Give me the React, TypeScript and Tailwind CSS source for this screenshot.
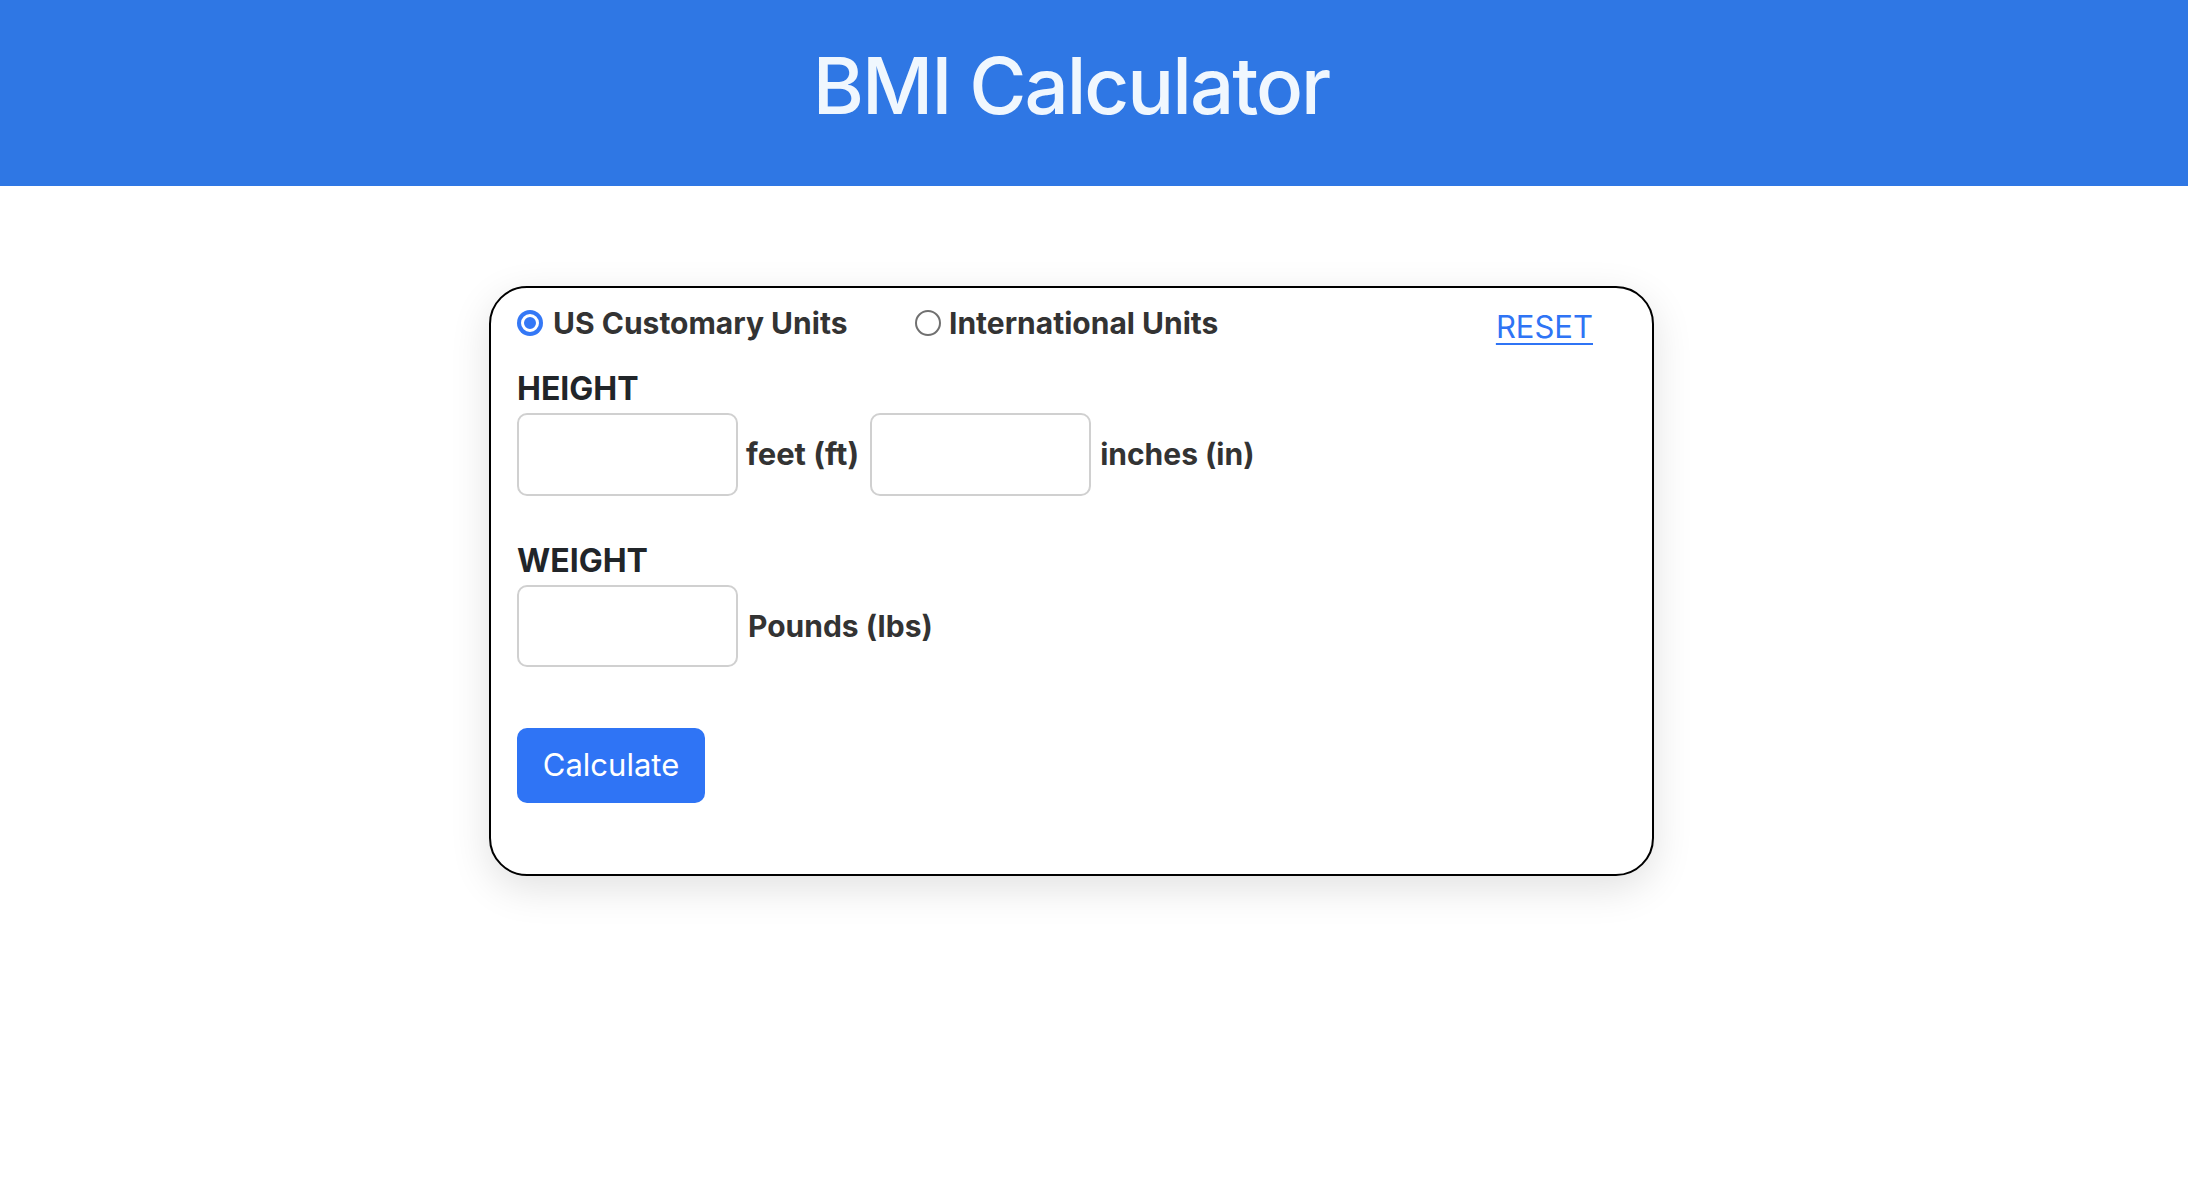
import { useState } from 'react';

export default function App() {
  const [units, setUnits] = useState<'us' | 'intl'>('us');

  return (
    <div className="min-h-screen bg-white font-['Inter',sans-serif]">
      <header className="h-[186px] bg-[#2f77e4] flex items-center justify-center pr-[46px] pb-[14px]">
        <h1 className="text-[78px] leading-none font-medium tracking-[-2px] text-[#f0f7fe]">BMI Calculator</h1>
      </header>

      <div className="pl-[489px] pt-[100px]">
        <div className="w-[1165px] h-[590px] rounded-[38px] border-2 border-black bg-white shadow-[0_12px_40px_rgba(0,0,0,0.12)] pt-[20px] pl-[26px] pr-[59px]">
          <div className="flex items-start">
            <label className="w-[398px] flex items-center gap-[10px] cursor-pointer" onClick={() => setUnits('us')}>
              <Radio checked={units === 'us'} />
              <span className="text-[30px] leading-none font-bold text-[#333]">US Customary Units</span>
            </label>
            <label className="flex items-center gap-[8px] cursor-pointer" onClick={() => setUnits('intl')}>
              <Radio checked={units === 'intl'} />
              <span className="text-[30px] leading-none font-bold text-[#333]">International Units</span>
            </label>
            <a href="#" className="ml-auto mt-[3px] text-[31px] leading-none text-[#2f74f5] underline underline-offset-[5px] decoration-2">RESET</a>
          </div>

          <div className="mt-[31px] text-[32px] leading-none font-bold text-[#212529]">HEIGHT</div>
          <div className="mt-[8px] flex items-center">
            <input className="w-[221px] h-[83px] rounded-[10px] border-2 border-[#d0d0d0] outline-none px-3 text-[28px]" />
            <span className="ml-[8px] mr-[11px] text-[31px] font-bold text-[#333]">feet (ft)</span>
            <input className="w-[221px] h-[83px] rounded-[10px] border-2 border-[#d0d0d0] outline-none px-3 text-[28px]" />
            <span className="ml-[9px] text-[30px] font-bold text-[#333]">inches (in)</span>
          </div>

          <div className="mt-[49px] text-[32px] leading-none font-bold text-[#212529]">WEIGHT</div>
          <div className="mt-[8px] flex items-center">
            <input className="w-[221px] h-[82px] rounded-[10px] border-2 border-[#d0d0d0] outline-none px-3 text-[28px]" />
            <span className="ml-[10px] text-[30px] font-bold text-[#333]">Pounds (lbs)</span>
          </div>

          <button className="mt-[61px] w-[188px] h-[75px] rounded-[10px] bg-[#2f74f5] text-white text-[31px] flex items-center justify-center">
            Calculate
          </button>
        </div>
      </div>
    </div>
  );
}

function Radio({ checked }: { checked: boolean }) {
  if (checked) {
    return (
      <span className="w-[26px] h-[26px] rounded-full bg-[#3478f6] flex items-center justify-center shrink-0">
        <span className="w-[18px] h-[18px] rounded-full bg-[#3478f6] border-[3px] border-white" />
      </span>
    );
  }
  return <span className="w-[26px] h-[26px] rounded-full border-2 border-[#707070] bg-white shrink-0" />;
}
